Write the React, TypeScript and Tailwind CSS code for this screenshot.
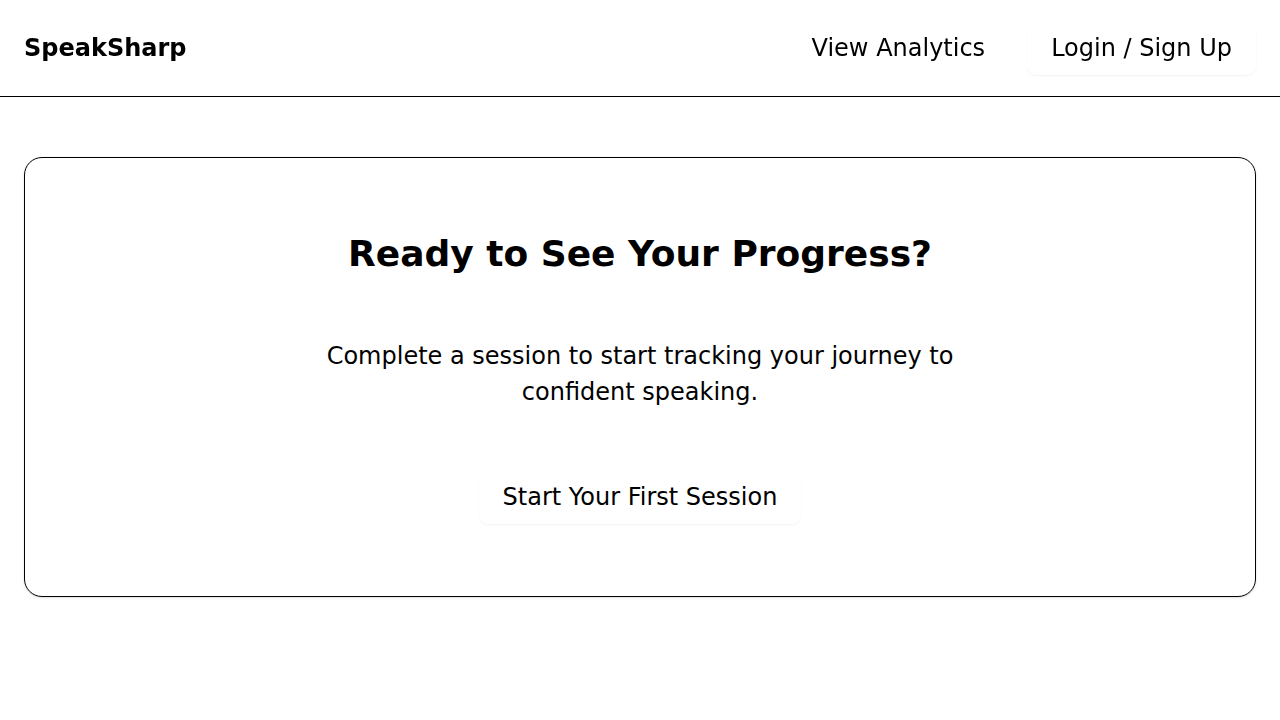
import React from "react";

function Header() {
  return (
    <header className="sticky top-0 z-10 border-b border-black backdrop-blur-sm">
      <div className="flex h-24 items-center justify-between px-6">
        <a href="#" className="text-2xl leading-9 font-bold">SpeakSharp</a>
        <nav className="flex items-center gap-[18px]">
          <a href="#analytics" className="flex h-[54px] items-center rounded-[9px] px-6 text-2xl">View Analytics</a>
          <a href="#login" className="flex h-[54px] items-center rounded-[9px] px-6 text-2xl shadow-xs">Login / Sign Up</a>
        </nav>
      </div>
    </header>
  );
}

function EmptyState() {
  return (
    <section className="flex flex-col items-center rounded-[18px] border border-black bg-white px-6 py-[72px] text-center shadow-sm">
      <h1 className="text-4xl leading-[48px] font-bold">Ready to See Your Progress?</h1>
      <p className="mt-[60px] max-w-2xl text-2xl leading-9">
        Complete a session to start tracking your journey to confident speaking.
      </p>
      <button type="button" className="mt-[60px] h-[54px] rounded-[9px] px-6 text-2xl shadow-xs">
        Start Your First Session
      </button>
    </section>
  );
}

export default function App() {
  return (
    <div className="min-h-screen bg-white font-['DejaVu_Sans',sans-serif] text-black">
      <Header />
      <main className="px-6 py-[60px]">
        <EmptyState />
      </main>
    </div>
  );
}
